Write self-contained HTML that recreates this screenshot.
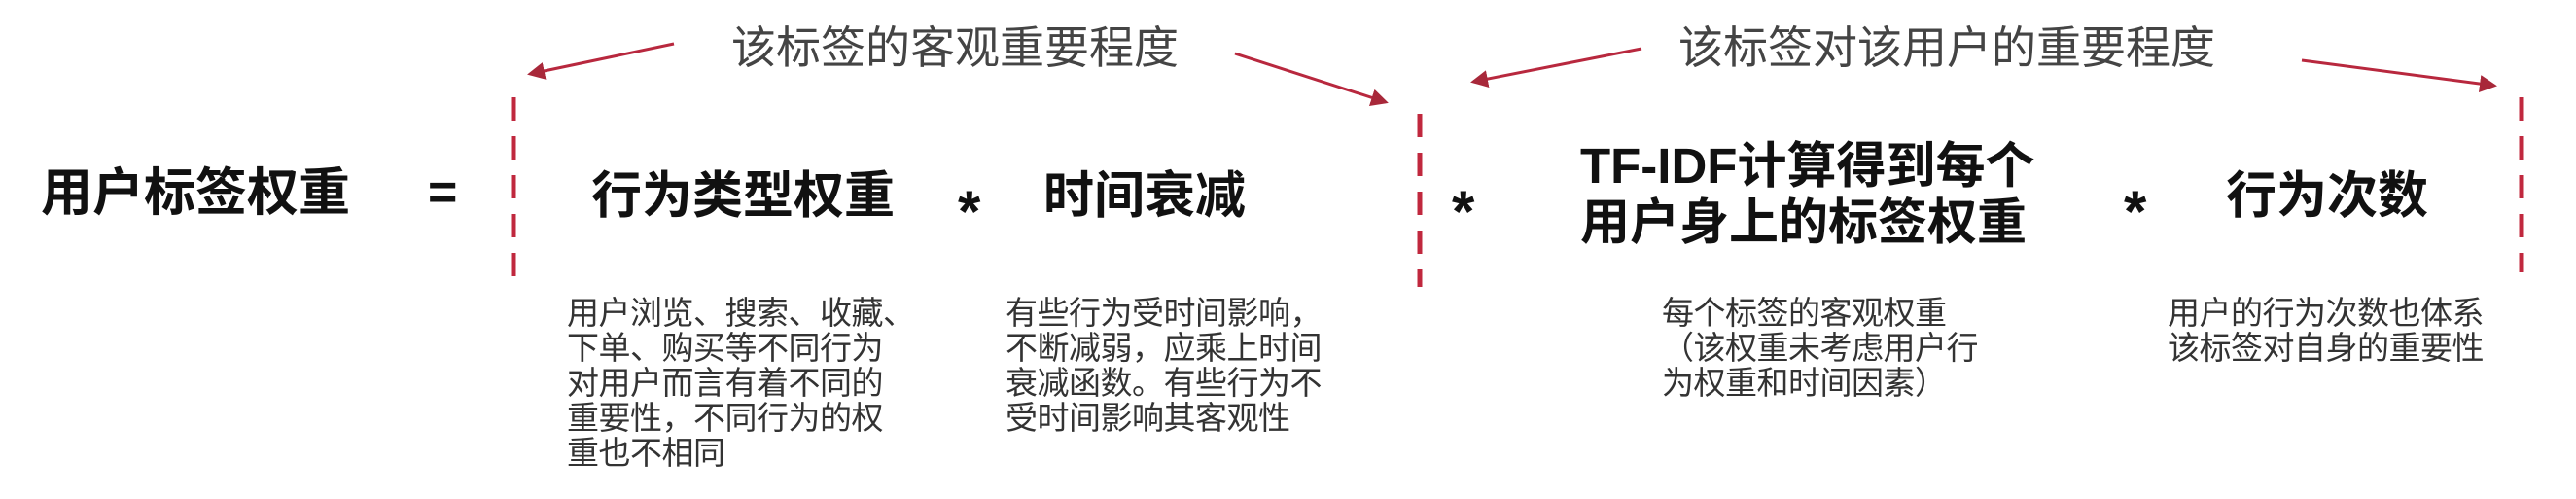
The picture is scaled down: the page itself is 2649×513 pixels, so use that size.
<!DOCTYPE html>
<html><head><meta charset="utf-8"><style>
html,body{margin:0;padding:0;background:#fff;}
body{width:2649px;height:513px;position:relative;overflow:hidden;font-family:"Liberation Sans","Noto Sans CJK SC",sans-serif;}
.t{position:absolute;white-space:nowrap;line-height:1;}
.b{font-weight:bold;color:#111;font-size:52px;}
.h{color:#444;font-size:46px;}
.s{color:#333;font-size:33px;line-height:36px;white-space:pre;letter-spacing:-0.5px;}
.ast{font-size:60px;}
</style></head><body>
<svg width="2649" height="513" style="position:absolute;left:0;top:0">
<defs><marker id="a" markerWidth="6" markerHeight="6" refX="5" refY="3" orient="auto"><path d="M0,0 L6,3 L0,6 z" fill="#a8283a"/></marker></defs>
<g stroke="#b8283e" stroke-width="3" fill="none" marker-end="url(#a)">
<line x1="693" y1="45" x2="545" y2="76"/>
<line x1="1270" y1="55" x2="1425" y2="105"/>
<line x1="1688" y1="50" x2="1515" y2="84"/>
<line x1="2367" y1="62" x2="2565" y2="88"/>
</g>
<g stroke="#c0283e" stroke-width="5" stroke-dasharray="24 16">
<line x1="528" y1="100" x2="528" y2="285"/>
<line x1="1460" y1="117" x2="1460" y2="295"/>
<line x1="2593" y1="100" x2="2593" y2="280"/>
</g>
</svg>
<div class="t h" style="left:752px;top:26px">该标签的客观重要程度</div>
<div class="t h" style="left:1726px;top:26px">该标签对该用户的重要程度</div>
<div class="t b" style="left:42px;top:172px;font-size:53px">用户标签权重</div>
<div class="t b" style="left:440px;top:172px">=</div>
<div class="t b" style="left:608px;top:176px">行为类型权重</div>
<div class="t b ast" style="left:985px;top:188px">*</div>
<div class="t b" style="left:1073px;top:176px">时间衰减</div>
<div class="t b ast" style="left:1493px;top:188px">*</div>
<div class="t b" style="left:1625px;top:142px;line-height:58px;font-size:51px">TF-IDF计算得到每个<br>用户身上的标签权重</div>
<div class="t b ast" style="left:2184px;top:188px">*</div>
<div class="t b" style="left:2289px;top:176px">行为次数</div>
<div class="t s" style="left:583px;top:304px">用户浏览、搜索、收藏、
下单、购买等不同行为
对用户而言有着不同的
重要性，不同行为的权
重也不相同</div>
<div class="t s" style="left:1034px;top:304px">有些行为受时间影响，
不断减弱，应乘上时间
衰减函数。有些行为不
受时间影响其客观性</div>
<div class="t s" style="left:1709px;top:304px">每个标签的客观权重
（该权重未考虑用户行
为权重和时间因素）</div>
<div class="t s" style="left:2229px;top:304px">用户的行为次数也体系
该标签对自身的重要性</div>
</body></html>
